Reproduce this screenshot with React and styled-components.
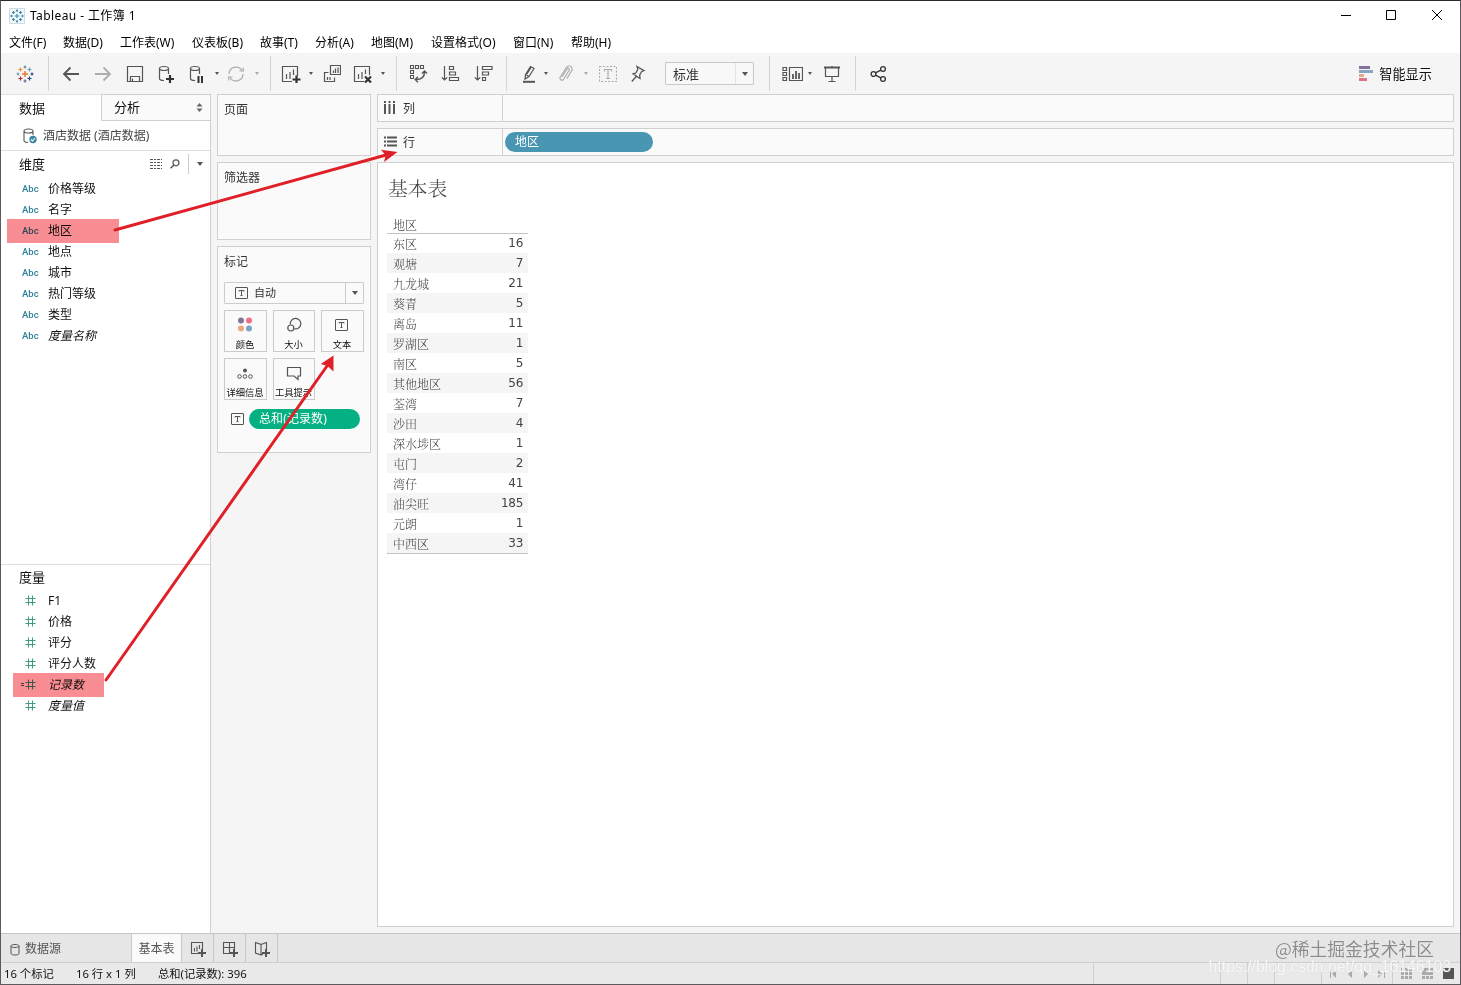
import React from 'react';
import styled, { createGlobalStyle, css } from 'styled-components';

const GlobalStyle = createGlobalStyle`
  * { box-sizing: border-box; }
  body {
    margin: 0;
    overflow: hidden;
    font-family: 'Noto Sans', 'Noto Sans CJK SC', sans-serif;
    font-size: 12px;
    line-height: 16px;
    color: #222;
  }
  svg { display: block; flex: none; }
`;

const line = '#d0d0d0';

const Window = styled.div`
  position: relative;
  display: flex;
  flex-direction: column;
  width: 1461px;
  height: 985px;
  border: 1px solid #5c5a5c;
  border-top-color: #2f2a2e;
  background: #fff;
  white-space: nowrap;
`;

const TitleBar = styled.header`
  display: flex;
  align-items: center;
  height: 29px;
  padding: 0 17px 0 8px;
  color: #000;
`;

const Title = styled.span`
  flex: 1;
  margin-left: 5px;
  letter-spacing: 0.4px;
`;

const MenuBar = styled.nav`
  display: flex;
  align-items: center;
  height: 23px;
  padding: 2px 0 0 8px;
  color: #000;
`;

const MenuItem = styled.span`
  width: ${p => p.$width}px;
`;

const Toolbar = styled.div`
  display: flex;
  height: 41px;
  background: #f5f5f5;
`;

const ToolGroup = styled.div`
  display: flex;
  align-items: center;
  width: ${p => p.$width}px;
  height: 35px;
  margin-top: 3px;
  border-right: ${p => (p.$last ? '0' : '1px solid #d4d4d4')};
`;

const Tool = styled.div`
  margin-left: ${p => p.$gap}px;
  opacity: ${p => (p.$off ? 0.45 : 1)};
`;

const Caret = styled.i`
  width: 0;
  height: 0;
  margin-left: ${p => p.$gap || 0}px;
  border: 3px solid transparent;
  border-width: 3px 2.5px 0;
  border-top-color: ${p => (p.$off ? '#aaa' : '#555')};
`;

const FitSelect = styled.div`
  display: flex;
  align-items: center;
  width: 89px;
  height: 23px;
  margin-left: 19px;
  padding-left: 7px;
  border: 1px solid #c9c9c9;
  border-radius: 1px;
  background: #f8f8f8;
  font-size: 13px;
  color: #333;
`;

const SelectArrow = styled.span`
  display: flex;
  align-items: center;
  justify-content: center;
  width: 18px;
  height: 100%;
  margin-left: auto;
  border-left: 1px solid ${p => p.$line || '#e4e4e4'};
`;

const DownArrow = styled.i`
  border: 3.5px solid transparent;
  border-width: 4px 3.5px 0;
  border-top-color: #555;
`;

const ShowMe = styled.div`
  display: flex;
  align-items: center;
  gap: 6px;
  margin-left: auto;
  padding-right: 28px;
  font-size: 13.2px;
  color: #111;
`;

const Main = styled.main`
  display: flex;
  height: 839px;
  background: #f5f5f5;
`;

const Sidebar = styled.aside`
  display: flex;
  flex-direction: column;
  width: 210px;
  background: #fff;
  border-right: 1px solid ${line};
`;

const Tabs = styled.div`
  display: flex;
  height: 27px;
  font-size: 13px;
  line-height: 27px;
  color: #111;
`;

const Tab = styled.div`
  display: flex;
  align-items: center;
  width: ${p => (p.$active ? 100 : 109)}px;
  padding-left: ${p => (p.$active ? 18 : 12)}px;
  border-top: 1px solid ${p => (p.$active ? '#e4e4e4' : line)};
  ${p => !p.$active && css`
    border-left: 1px solid ${line};
    border-bottom: 1px solid ${line};
    background: #fafafa;
  `}
  svg { margin-left: auto; margin-right: 7px; }
`;

const DataSource = styled.div`
  display: flex;
  align-items: center;
  height: 30px;
  padding-left: 22px;
  gap: 6px;
  border-bottom: 1px solid #dedede;
  color: #444;
`;

const Pane = styled.section`
  height: ${p => p.$height || 'auto'};
  border-bottom: ${p => (p.$height ? '1px solid #dedede' : '0')};
`;

const PaneHead = styled.div`
  display: flex;
  align-items: center;
  height: ${p => p.$height}px;
  padding: 0 0 2px 18px;
  font-size: 13px;
  color: #111;
`;

const PaneTools = styled.div`
  display: flex;
  align-items: center;
  gap: 8px;
  margin-left: auto;
`;

const PaneMenu = styled.span`
  display: flex;
  align-items: center;
  justify-content: center;
  width: 22px;
  height: 20px;
  border-left: 1px solid #ccc;
`;

const Field = styled.div`
  position: relative;
  display: flex;
  align-items: center;
  height: 21px;
  color: #111;
  font-style: ${p => (p.$italic ? 'italic' : 'normal')};
  ${p => p.$mark && css`
    &::after {
      content: '';
      position: absolute;
      top: -1px;
      left: ${p.$mark[0]}px;
      width: ${p.$mark[1]}px;
      height: 24px;
      background: #f88e93;
      mix-blend-mode: multiply;
    }
  `}
`;

const FieldType = styled.span`
  display: flex;
  width: 47px;
  padding-left: ${p => p.$pad}px;
  font: 500 9.5px Roboto, sans-serif;
  color: #2f7f99;
`;

const Cards = styled.div`
  display: flex;
  flex-direction: column;
  gap: 6px;
  width: 154px;
  margin-left: 6px;
`;

const Card = styled.section`
  height: ${p => p.$height}px;
  padding: 7px 6px;
  border: 1px solid ${line};
  background: #fafafa;
  color: #333;
`;

const MarkType = styled.div`
  display: flex;
  align-items: center;
  gap: 6px;
  width: 140px;
  height: 22px;
  margin-top: 12px;
  padding-left: 10px;
  border: 1px solid #ccc;
  border-radius: 1px;
  font-size: 11px;
`;

const MarkGrid = styled.div`
  display: grid;
  grid-template-columns: 43px 42px 43px;
  gap: 6px;
  margin-top: 6px;
`;

const MarkButton = styled.div`
  display: flex;
  flex-direction: column;
  align-items: center;
  height: 42px;
  padding: 5px 1px 0 0;
  border: 1px solid #ccc;
  font-size: 9.3px;
  line-height: 12px;
  color: #111;
  svg { margin-bottom: 6px; }
`;

const MarkRow = styled.div`
  display: flex;
  align-items: center;
  gap: 5px;
  margin-top: 9px;
  padding-left: 7px;
`;

const Pill = styled.div`
  width: ${p => p.$width}px;
  height: 20px;
  padding-left: 10px;
  border-radius: 10px;
  background: ${p => p.$color};
  color: #fff;
  line-height: 20px;
  letter-spacing: 0.1px;
`;

const Workspace = styled.div`
  display: flex;
  flex-direction: column;
  gap: 6px;
  width: 1077px;
  margin-left: 6px;
`;

const Shelf = styled.div`
  display: flex;
  align-items: center;
  height: 28px;
  border: 1px solid ${line};
  background: #fafafa;
`;

const ShelfLabel = styled.div`
  display: flex;
  align-items: center;
  gap: 6px;
  width: 125px;
  height: 100%;
  margin-right: 2px;
  padding: 2px 0 0 6px;
  border-right: 1px solid ${line};
  color: #333;
  svg { margin-bottom: 4px; }
`;

const Sheet = styled.section`
  height: 765px;
  padding: 11px 9px;
  border: 1px solid ${line};
  background: #fff;
`;

const SheetTitle = styled.h1`
  margin: 0 0 0 1px;
  font: 300 19.8px/28px 'Noto Serif CJK SC', 'Noto Sans CJK SC', serif;
  color: #444;
`;

const Table = styled.div`
  width: 141px;
  margin-top: 12px;
  border-bottom: 1px solid #c4c4c4;
  font: 300 12px/21px 'Noto Serif CJK SC', 'Noto Sans CJK SC', serif;
  color: #444;
`;

const TableHead = styled.div`
  height: 20px;
  padding-left: 6px;
  border-bottom: 1px solid #c4c4c4;
`;

const TableRow = styled.div`
  display: flex;
  justify-content: space-between;
  height: 20px;
  padding: 0 5px 0 6px;
  &:nth-child(odd) { background: #f5f5f5; }
  &:nth-child(2) { height: 19px; line-height: 19px; }
`;

const Amount = styled.span`
  font-family: 'DejaVu Sans', sans-serif;
  font-weight: 400;
  letter-spacing: -0.3px;
`;

const SheetTabs = styled.div`
  display: flex;
  height: 30px;
  border-top: 1px solid #c6c6c6;
  border-bottom: 1px solid #cfcfcf;
  background: #e6e6e6;
  color: #555;
`;

const SheetTab = styled.div`
  display: flex;
  align-items: center;
  justify-content: ${p => (p.$start ? 'flex-start' : 'center')};
  gap: 5px;
  width: ${p => p.$width}px;
  padding: 2px 0 0 ${p => (p.$start ? 9 : 0)}px;
  border-right: 1px solid #c8c8c8;
  background: ${p => (p.$active ? '#fafafa' : 'transparent')};
`;

const StatusBar = styled.footer`
  display: flex;
  align-items: center;
  flex: 1;
  padding-left: 3px;
  background: #e9e9e9;
  font-size: 11.3px;
  color: #111;
`;

const Status = styled.span`
  width: ${p => p.$width}px;
`;

const StatusCell = styled.div`
  display: flex;
  align-items: center;
  gap: ${p => p.$gap || 0}px;
  width: ${p => p.$width}px;
  height: 100%;
  padding-left: 8px;
  border-left: 1px solid #cecece;
`;

const Annotations = styled.svg`
  position: absolute;
  top: -1px;
  left: -1px;
  pointer-events: none;
`;

const CommunityMark = styled.div`
  position: absolute;
  right: 26px;
  bottom: 24px;
  font: 17.8px/24px 'Noto Sans CJK SC', sans-serif;
  color: #8c8c8c;
  text-shadow: 0 0 1px #fff;
`;

const UrlMark = styled.div`
  position: absolute;
  right: 9px;
  bottom: 7px;
  font: 15.8px/20px 'Liberation Sans', sans-serif;
  color: rgba(255, 255, 255, 0.85);
  text-shadow: 0 0 1px #ccc;
`;

function Icon({ w = 18, h = 18, color = '#555', sw = 1.2, children }) {
  return (
    <svg width={w} height={h} viewBox={`0 0 ${w} ${h}`} fill="none" stroke={color} strokeWidth={sw}>
      {children}
    </svg>
  );
}

// centre cross, four small ones on the axes and four on the diagonals
function TableauLogo({ size = 18, mono }) {
  const c = mono
    ? Array(9).fill('#3f87ae')
    : ['#e8762d', '#59879b', '#5b6591', '#7199a6', '#1f447e', '#eb912c', '#c72035', '#1f447e'];
  return (
    <svg width={size} height={size} viewBox="0 0 18 18" fill="none" strokeWidth={mono ? 1.5 : 1.2}>
      <path stroke={c[0]} strokeWidth="1.4" d="M9 6v6M6 9h6" />
      <path stroke={c[1]} d="M9 .5v3M7.5 2h3" />
      <path stroke={c[2]} d="M9 14.5v3M7.5 16h3" />
      <path stroke={c[3]} d="M2 7.5v3M.5 9h3" />
      <path stroke={c[4]} d="M16 7.5v3M14.5 9h3" />
      <path stroke={c[5]} d="M4.5 2.5v4M2.5 4.5h4" />
      <path stroke={c[6]} d="M4.5 11.5v4M2.5 13.5h4" />
      <path stroke={c[7]} d="M13.5 11.5v4M11.5 13.5h4" />
      <path stroke={c[3]} d="M13.5 2.5v4M11.5 4.5h4" />
    </svg>
  );
}

const Cylinder = () => <path d="M1.5 3.5v10c0 1.2 2 2 4.5 2M10.5 3.5V9M1.5 3.5c0-1.3 2-2 4.5-2s4.5.7 4.5 2-2 2-4.5 2-4.5-.7-4.5-2z" />;

function TextBox({ w = 13, h = 12 }) {
  return (
    <Icon w={w} h={h} sw={1}>
      <rect x=".5" y=".5" width={w - 1} height={h - 1} rx=".5" />
      <path d={`M${w / 2 - 2.5} 4.5v-1h5v1M${w / 2} 3.5v5M${w / 2 - 1} 8.5h2`} />
    </Icon>
  );
}

const Hash = ({ computed }) => (
  <Icon w={computed ? 15 : 11} h={11} color="#3f9c7c" sw={1}>
    <g transform={computed ? 'translate(4 0)' : undefined}>
      <path d="M3.5 .5v10M7.5 .5v10M.5 3.5h10M.5 7.5h10" />
    </g>
    {computed && <path stroke="#555" d="M0 4.5h3M0 6.5h3" />}
  </Icon>
);

const menus = [
  ['文件(F)', 54], ['数据(D)', 57], ['工作表(W)', 72], ['仪表板(B)', 68], ['故事(T)', 55],
  ['分析(A)', 56], ['地图(M)', 60], ['设置格式(O)', 82], ['窗口(N)', 58], ['帮助(H)', 50],
];

const dimensions = [
  { name: '价格等级' },
  { name: '名字' },
  { name: '地区', mark: [6, 112] },
  { name: '地点' },
  { name: '城市' },
  { name: '热门等级' },
  { name: '类型' },
  { name: '度量名称', italic: true },
];

const measures = [
  { name: 'F1' },
  { name: '价格' },
  { name: '评分' },
  { name: '评分人数' },
  { name: '记录数', italic: true, computed: true, mark: [12, 91] },
  { name: '度量值', italic: true },
];

const rows = [
  ['东区', 16], ['观塘', 7], ['九龙城', 21], ['葵青', 5], ['离岛', 11], ['罗湖区', 1],
  ['南区', 5], ['其他地区', 56], ['荃湾', 7], ['沙田', 4], ['深水埗区', 1], ['屯门', 2],
  ['湾仔', 41], ['油尖旺', 185], ['元朗', 1], ['中西区', 33],
];

function WindowHeader() {
  return (
    <>
      <TitleBar>
        <svg width="16" height="16" viewBox="0 0 16 16">
          <rect x=".5" y=".5" width="15" height="15" fill="#f4f8fa" stroke="#cddbe3" />
          <svg x="1" y="1" width="14" height="14"><TableauLogo size={14} mono /></svg>
        </svg>
        <Title>Tableau - 工作簿 1</Title>
        <Icon w={103} h={12} color="#000" sw={1}>
          <path d="M1 5.5h10M46.5 .5h9v9h-9zM92 0l10 10M102 0L92 10" />
        </Icon>
      </TitleBar>
      <MenuBar>
        {menus.map(([label, width]) => <MenuItem key={label} $width={width}>{label}</MenuItem>)}
      </MenuBar>
    </>
  );
}

function MainToolbar() {
  return (
    <Toolbar>
      <ToolGroup $width={48}><Tool $gap={15}><TableauLogo /></Tool></ToolGroup>
      <ToolGroup $width={222}>
        <Tool $gap={13}><Icon sw={1.8}><path d="M17 9H2M8.5 2.5L2 9l6.5 6.5" /></Icon></Tool>
        <Tool $gap={14} $off><Icon sw={1.8}><path d="M1 9h15M9.5 2.5L16 9l-6.5 6.5" /></Icon></Tool>
        <Tool $gap={14}><Icon><path d="M1.5 1.5h15v15h-15zM4.5 16.5v-5h9v5M6.5 13.5v3" /></Icon></Tool>
        <Tool $gap={14}><Icon><Cylinder /><path strokeWidth="2.2" stroke="#333" d="M12 10v8M8 14h8" /></Icon></Tool>
        <Tool $gap={13}><Icon><Cylinder /><path strokeWidth="2" stroke="#333" d="M9.5 11v7M13 11v7" /></Icon></Tool>
        <Caret $gap={8} />
        <Tool $gap={8} $off><Icon><path d="M2 9a7 7 0 0 1 13-3.5M16 9a7 7 0 0 1-13 3.5M12.5 6h4l-.5-3.5M5.5 12h-4l.5 3.5" /></Icon></Tool>
        <Caret $gap={10} $off />
      </ToolGroup>
      <ToolGroup $width={126}>
        <Tool $gap={10}>
          <Icon w={20}><path d="M11 16.5H1.5v-15h15V11M5.5 9v5M9 7v7M12.5 4.5V10" /><path strokeWidth="2.2" stroke="#333" d="M15.5 10.5v8M11.5 14.5h8" /></Icon>
        </Tool>
        <Caret $gap={8} />
        <Tool $gap={10}><Icon><path d="M7.5 .5h10v9h-10zM10.5 5.5V8M12.5 3.5V8M15 2.5V8M5.5 7.5h-4v9h10v-4M4.5 12v3M7 12v3" /></Icon></Tool>
        <Tool $gap={12}>
          <Icon w={20}><path d="M11 16.5H1.5v-15h15V10M5.5 9v5M9 7v7M12.5 4.5V9" /><path strokeWidth="2.2" stroke="#333" d="M12 11.5l6 6M18 11.5l-6 6" /></Icon>
        </Tool>
        <Caret $gap={8} />
      </ToolGroup>
      <ToolGroup $width={110}>
        <Tool $gap={12}>
          <Icon w={19} h={19} sw={1.1}>
            <path d="M1.5 1.5h3v3h-3zM6.5 1.5h3v3h-3zM11.5 1.5h3v3h-3zM1.5 6.5h3v3h-3zM1.5 11.5h3v3h-3z" />
            <path strokeWidth="1.4" d="M15.5 8c0 4.5-3 7.5-8.5 7.5M13 9.5L15.5 7 18 9.5M9 12.8l-2.8 2.7L9 18.2" />
          </Icon>
        </Tool>
        <Tool $gap={13}><Icon w={20}><path d="M3.5 1v14M.8 12.3L3.5 15l2.7-2.7M8.5 1.5h4v3h-4zM8.5 7h6v3h-6zM8.5 12.5h9v3h-9z" /></Icon></Tool>
        <Tool $gap={13}><Icon w={20}><path d="M3.5 1v14M.8 12.3L3.5 15l2.7-2.7M8.5 1.5H18v3H8.5zM8.5 7h6v3h-6zM8.5 12.5h3v3h-3z" /></Icon></Tool>
      </ToolGroup>
      <ToolGroup $width={263}>
        <Tool $gap={14}><Icon w={16}><path d="M4.5 9.5l5-8 3.5 2-5 8-4 2.5zM4.5 9.5l3.5 2M6 9l4-6.5" /><path strokeWidth="2" d="M2 16.8h12" /></Icon></Tool>
        <Caret $gap={7} />
        <Tool $gap={10} $off><Icon w={15}><path d="M4 12l5-8c1-1.5 3-.5 2 1.5L5.8 14c-1.5 2.5-5 .5-3.5-2L8 3c2.5-4 8-1 5.5 3L9 13.5" /></Icon></Tool>
        <Caret $gap={11} $off />
        <Tool $gap={11} $off>
          <Icon><rect x=".5" y="1.5" width="17" height="15" strokeDasharray="2 1.5" /><path d="M5.5 6.5v-2h7v2M9 4.5v9M7 13.5h4" /></Icon>
        </Tool>
        <Tool $gap={14}><Icon w={15} sw={1.3}><path d="M6 1.5l7 4.2-2.3.8-2 3.5.3 3.5-7-4.7 2.8-.8 2-3.7zM5.2 11.5L.8 16.5" /></Icon></Tool>
        <FitSelect>标准<SelectArrow><DownArrow /></SelectArrow></FitSelect>
      </ToolGroup>
      <ToolGroup $width={86}>
        <Tool $gap={12}><Icon w={21}><path d="M1 2.5h3.5v3H1zM1 7.5h3.5v3H1zM1 12.5h3.5v3H1zM7.5 2.5h13v13h-13z" /><path strokeWidth="1.8" d="M11 9v5M14 6v8M17 8v6" /></Icon></Tool>
        <Caret $gap={5} />
        <Tool $gap={11}><Icon><path strokeWidth="2" d="M1 2.5h16" /><path d="M2.5 3v8.5h13V3M9 1v1M9 11.5V16M5.5 16.5h7" /></Icon></Tool>
      </ToolGroup>
      <ToolGroup $width={46} $last>
        <Tool $gap={14}>
          <Icon color="#333" sw={1.3}>
            <circle cx="3.5" cy="9" r="2.4" /><circle cx="13" cy="4" r="2.4" /><circle cx="13" cy="14" r="2.4" />
            <path d="M5.5 7.8l5.3-2.7M5.5 10.2l5.3 2.7" />
          </Icon>
        </Tool>
      </ToolGroup>
      <ShowMe>
        <svg width="14" height="15" viewBox="0 0 14 15">
          <path fill="#83739a" d="M0 0h11v3H0z" />
          <path fill="#86a5c1" d="M0 4h14v3H0z" />
          <path fill="#e5ab89" d="M0 8h5v3H0z" />
          <path fill="#df7384" d="M0 12h8v3H0z" />
        </svg>
        智能显示
      </ShowMe>
    </Toolbar>
  );
}

function DataPane() {
  return (
    <Sidebar>
      <Tabs>
        <Tab $active>数据</Tab>
        <Tab>
          分析
          <svg width="7" height="9" viewBox="0 0 7 9" fill="#666"><path d="M.5 3.5h6L3.5 0zM.5 5.5h6L3.5 9z" /></svg>
        </Tab>
      </Tabs>
      <DataSource>
        <Icon w={14} h={16} sw={1.1}>
          <path d="M1 3v9.5c0 1 1.5 1.8 4 2M10 3v4M1 3c0-1.2 2-2 4.5-2S10 1.8 10 3s-2 2-4.5 2S1 4.2 1 3z" />
          <circle cx="10" cy="11.5" r="3.7" fill="#3a86a3" stroke="none" />
          <path stroke="#fff" d="M8 11.5l1.5 1.5 2.5-3" />
        </Icon>
        酒店数据 (酒店数据)
      </DataSource>
      <Pane $height="414px">
        <PaneHead $height={27}>
          维度
          <PaneTools>
            <Icon w={12} h={10} sw={1}><path strokeDasharray="3 1 2 1" d="M0 .5h12M0 3.5h12M0 6.5h12M0 9.5h12" /></Icon>
            <Icon w={10} h={10} sw={1.2}><circle cx="6" cy="3.8" r="3" /><path strokeWidth="1.5" d="M4 6L.5 9.3" /></Icon>
            <PaneMenu><DownArrow /></PaneMenu>
          </PaneTools>
        </PaneHead>
        {dimensions.map(f => (
          <Field key={f.name} $italic={f.italic} $mark={f.mark}>
            <FieldType $pad={21}>Abc</FieldType>{f.name}
          </Field>
        ))}
      </Pane>
      <Pane>
        <PaneHead $height={25}>度量</PaneHead>
        {measures.map(f => (
          <Field key={f.name} $italic={f.italic} $mark={f.mark}>
            <FieldType $pad={f.computed ? 20 : 24}><Hash computed={f.computed} /></FieldType>{f.name}
          </Field>
        ))}
      </Pane>
    </Sidebar>
  );
}

function MarksCard() {
  return (
    <Card $height={207}>
      标记
      <MarkType><TextBox />自动<SelectArrow $line="#ccc"><DownArrow /></SelectArrow></MarkType>
      <MarkGrid>
        <MarkButton>
          <svg width="16" height="17" viewBox="0 0 16 17">
            <circle cx="4" cy="4.5" r="3" fill="#83739a" /><circle cx="12" cy="4.5" r="3" fill="#ea7287" />
            <circle cx="4" cy="12.5" r="3" fill="#eda77a" /><circle cx="12" cy="12.5" r="3" fill="#7ba3c6" />
          </svg>
          颜色
        </MarkButton>
        <MarkButton>
          <Icon w={16} h={17}><path d="M4.3 8.5a5.3 5.3 0 1 1 4 4.3" /><circle cx="4.8" cy="12" r="3" /></Icon>
          大小
        </MarkButton>
        <MarkButton>
          <svg width="14" height="17" viewBox="0 0 14 17"><svg y="3" width="13" height="12"><TextBox /></svg></svg>
          文本
        </MarkButton>
        <MarkButton>
          <Icon w={16} h={17} sw={1}>
            <circle cx="8" cy="6.5" r="2" fill="#555" stroke="none" />
            <circle cx="2.5" cy="12.5" r="1.8" /><circle cx="8" cy="12.5" r="1.8" /><circle cx="13.5" cy="12.5" r="1.8" />
          </Icon>
          详细信息
        </MarkButton>
        <MarkButton>
          <Icon w={16} h={17}><path d="M1.5 3.5h13V12H12v3.5L8 12H1.5z" /></Icon>
          工具提示
        </MarkButton>
      </MarkGrid>
      <MarkRow><TextBox /><Pill $width={111} $color="#05b183">总和(记录数)</Pill></MarkRow>
    </Card>
  );
}

function View() {
  return (
    <Workspace>
      <Shelf>
        <ShelfLabel>
          <Icon w={13} h={13} sw={2}><path strokeDasharray="2 1 10" d="M1 0v13M5.5 0v13M10 0v13" /></Icon>列
        </ShelfLabel>
      </Shelf>
      <Shelf>
        <ShelfLabel>
          <Icon w={13} h={11} sw={2}><path strokeDasharray="2 1 10" d="M0 1.5h13M0 5.5h13M0 9.5h13" /></Icon>行
        </ShelfLabel>
        <Pill $width={148} $color="#4996b2">地区</Pill>
      </Shelf>
      <Sheet>
        <SheetTitle>基本表</SheetTitle>
        <Table>
          <TableHead>地区</TableHead>
          {rows.map(([name, count]) => (
            <TableRow key={name}>{name}<Amount>{count}</Amount></TableRow>
          ))}
        </Table>
      </Sheet>
    </Workspace>
  );
}

function BottomBar() {
  const plus = <path strokeWidth="2" d="M12 8v8M8 12h8" />;
  return (
    <>
      <SheetTabs>
        <SheetTab $width={131} $start>
          <Icon w={10} h={13} sw={1}><path d="M1 3v7.5c0 2 8 2 8 0V3M1 3c0-2 8-2 8 0s-8 2-8 0z" /></Icon>
          数据源
        </SheetTab>
        <SheetTab $width={50} $active>基本表</SheetTab>
        <SheetTab $width={32}><Icon w={16} h={16} sw={1.1}><path d="M8 12.5H1.5v-11h11V8M4.5 7v3.5M7 5.5v5M9.5 4v4" />{plus}</Icon></SheetTab>
        <SheetTab $width={32}><Icon w={16} h={16} sw={1.1}><path d="M8 12.5H1.5v-11h11V8M7.5 1.5v11M1.5 6.5h11" />{plus}</Icon></SheetTab>
        <SheetTab $width={32}><Icon w={16} h={16} sw={1.1}><path d="M1.5 1.5L7 3.5V14l-5.5-2zM7 3.5l5.5-2V8M7 14l2-.7" />{plus}</Icon></SheetTab>
      </SheetTabs>
      <StatusBar>
        <Status $width={72}>16 个标记</Status>
        <Status $width={82}>16 行 x 1 列</Status>
        <Status $width={935}>总和(记录数): 396</Status>
        <StatusCell $width={127} />
        <StatusCell $width={27} />
        <StatusCell $width={27} />
        <StatusCell $width={47} />
        <StatusCell $width={71}>
          <svg width="56" height="8" viewBox="0 0 56 8" fill="#aaa">
            <path d="M0 0h1v8H0zM6 0v8L2 4zM22 0v8l-4-4zM34 0l4 4-4 4zM48 0l4 4-4 4zM54 0h1v8h-1z" />
          </svg>
        </StatusCell>
        <StatusCell $width={68} $gap={10}>
          <Icon w={11} h={11} color="#aaa" sw={3}><path strokeDasharray="3 1" d="M0 1.5h11M0 5.5h11M0 9.5h11" /></Icon>
          <svg width="11" height="11" fill="#aaa"><path d="M0 0h11v7H0zM0 8h3v3H0zM4 8h3v3H4zM8 8h3v3H8z" /></svg>
          <svg width="11" height="11" fill="#555"><path d="M0 0h11v11H0z" /></svg>
        </StatusCell>
      </StatusBar>
    </>
  );
}

export default function App() {
  return (
    <>
      <GlobalStyle />
      <Window>
        <WindowHeader />
        <MainToolbar />
        <Main>
          <DataPane />
          <Cards>
            <Card $height={62}>页面</Card>
            <Card $height={78}>筛选器</Card>
            <MarksCard />
          </Cards>
          <View />
        </Main>
        <BottomBar />
        <Annotations width="1461" height="985" fill="#e02028" stroke="#e02028">
          <path strokeWidth="3" strokeLinecap="round" d="M115 230L386 155M106 680L327 366" />
          <path stroke="none" d="M397.5 152l-13.4 10 1.5-6.8-4.6-5.4zM333.5 355.5l-12.8 8.5 6.8 2 6 5.5z" />
        </Annotations>
        <CommunityMark>@稀土掘金技术社区</CommunityMark>
        <UrlMark>https://blog.csdn.net/qq_16146103</UrlMark>
      </Window>
    </>
  );
}
